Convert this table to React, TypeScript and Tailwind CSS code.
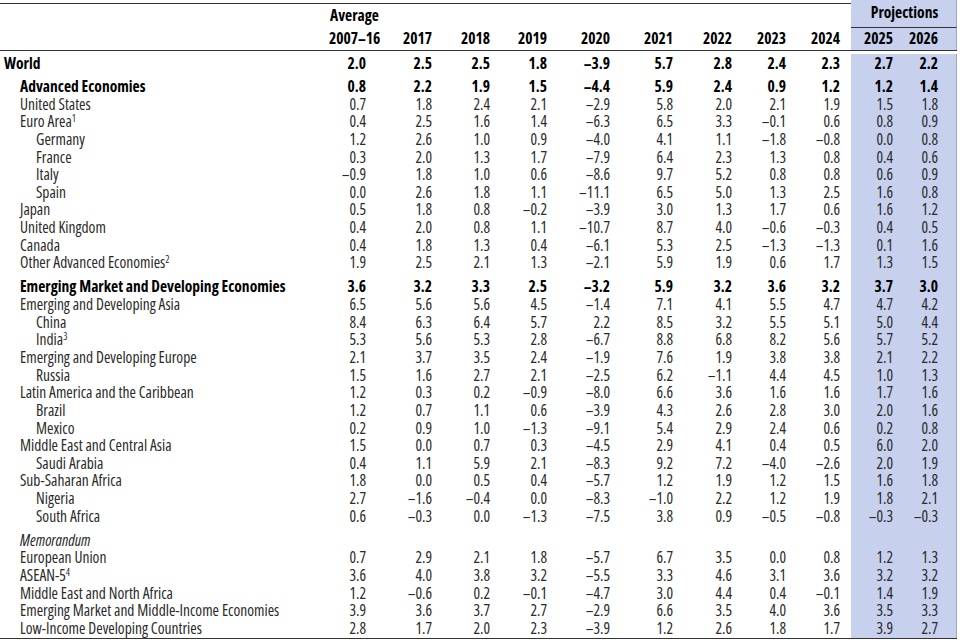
import React from 'react';

type Row = {
  label: string;
  sup?: string;
  level: 0 | 1 | 2;
  bold?: boolean;
  italic?: boolean;
  values?: string[];
  gapBefore?: boolean;
  tall?: boolean;
};

// widths of the historical columns after the average
const yearCols = [
  { y: '2017', w: 'w-[52px]' },
  { y: '2018', w: 'w-[58px]' },
  { y: '2019', w: 'w-[57px]' },
  { y: '2020', w: 'w-[63px]' },
  { y: '2021', w: 'w-[63px]' },
  { y: '2022', w: 'w-[59px]' },
  { y: '2023', w: 'w-[54px]' },
  { y: '2024', w: 'w-[54px]' },
];

const v = (s: string) => s.split(' ').map((x) => x.replace('-', '–'));

const rows: Row[] = [
  { label: 'World', level: 0, bold: true, tall: true, values: v('2.0 2.5 2.5 1.8 -3.9 5.7 2.8 2.4 2.3 2.7 2.2') },
  { label: 'Advanced Economies', level: 1, bold: true, values: v('0.8 2.2 1.9 1.5 -4.4 5.9 2.4 0.9 1.2 1.2 1.4') },
  { label: 'United States', level: 1, values: v('0.7 1.8 2.4 2.1 -2.9 5.8 2.0 2.1 1.9 1.5 1.8') },
  { label: 'Euro Area', sup: '1', level: 1, values: v('0.4 2.5 1.6 1.4 -6.3 6.5 3.3 -0.1 0.6 0.8 0.9') },
  { label: 'Germany', level: 2, values: v('1.2 2.6 1.0 0.9 -4.0 4.1 1.1 -1.8 -0.8 0.0 0.8') },
  { label: 'France', level: 2, values: v('0.3 2.0 1.3 1.7 -7.9 6.4 2.3 1.3 0.8 0.4 0.6') },
  { label: 'Italy', level: 2, values: v('-0.9 1.8 1.0 0.6 -8.6 9.7 5.2 0.8 0.8 0.6 0.9') },
  { label: 'Spain', level: 2, values: v('0.0 2.6 1.8 1.1 -11.1 6.5 5.0 1.3 2.5 1.6 0.8') },
  { label: 'Japan', level: 1, values: v('0.5 1.8 0.8 -0.2 -3.9 3.0 1.3 1.7 0.6 1.6 1.2') },
  { label: 'United Kingdom', level: 1, values: v('0.4 2.0 0.8 1.1 -10.7 8.7 4.0 -0.6 -0.3 0.4 0.5') },
  { label: 'Canada', level: 1, values: v('0.4 1.8 1.3 0.4 -6.1 5.3 2.5 -1.3 -1.3 0.1 1.6') },
  { label: 'Other Advanced Economies', sup: '2', level: 1, values: v('1.9 2.5 2.1 1.3 -2.1 5.9 1.9 0.6 1.7 1.3 1.5') },
  { label: 'Emerging Market and Developing Economies', level: 1, bold: true, gapBefore: true, values: v('3.6 3.2 3.3 2.5 -3.2 5.9 3.2 3.6 3.2 3.7 3.0') },
  { label: 'Emerging and Developing Asia', level: 1, values: v('6.5 5.6 5.6 4.5 -1.4 7.1 4.1 5.5 4.7 4.7 4.2') },
  { label: 'China', level: 2, values: v('8.4 6.3 6.4 5.7 2.2 8.5 3.2 5.5 5.1 5.0 4.4') },
  { label: 'India', sup: '3', level: 2, values: v('5.3 5.6 5.3 2.8 -6.7 8.8 6.8 8.2 5.6 5.7 5.2') },
  { label: 'Emerging and Developing Europe', level: 1, values: v('2.1 3.7 3.5 2.4 -1.9 7.6 1.9 3.8 3.8 2.1 2.2') },
  { label: 'Russia', level: 2, values: v('1.5 1.6 2.7 2.1 -2.5 6.2 -1.1 4.4 4.5 1.0 1.3') },
  { label: 'Latin America and the Caribbean', level: 1, values: v('1.2 0.3 0.2 -0.9 -8.0 6.6 3.6 1.6 1.6 1.7 1.6') },
  { label: 'Brazil', level: 2, values: v('1.2 0.7 1.1 0.6 -3.9 4.3 2.6 2.8 3.0 2.0 1.6') },
  { label: 'Mexico', level: 2, values: v('0.2 0.9 1.0 -1.3 -9.1 5.4 2.9 2.4 0.6 0.2 0.8') },
  { label: 'Middle East and Central Asia', level: 1, values: v('1.5 0.0 0.7 0.3 -4.5 2.9 4.1 0.4 0.5 6.0 2.0') },
  { label: 'Saudi Arabia', level: 2, values: v('0.4 1.1 5.9 2.1 -8.3 9.2 7.2 -4.0 -2.6 2.0 1.9') },
  { label: 'Sub-Saharan Africa', level: 1, values: v('1.8 0.0 0.5 0.4 -5.7 1.2 1.9 1.2 1.5 1.6 1.8') },
  { label: 'Nigeria', level: 2, values: v('2.7 -1.6 -0.4 0.0 -8.3 -1.0 2.2 1.2 1.9 1.8 2.1') },
  { label: 'South Africa', level: 2, values: v('0.6 -0.3 0.0 -1.3 -7.5 3.8 0.9 -0.5 -0.8 -0.3 -0.3') },
  { label: 'Memorandum', level: 1, italic: true, gapBefore: true },
  { label: 'European Union', level: 1, values: v('0.7 2.9 2.1 1.8 -5.7 6.7 3.5 0.0 0.8 1.2 1.3') },
  { label: 'ASEAN-5', sup: '4', level: 1, values: v('3.6 4.0 3.8 3.2 -5.5 3.3 4.6 3.1 3.6 3.2 3.2') },
  { label: 'Middle East and North Africa', level: 1, values: v('1.2 -0.6 0.2 -0.1 -4.7 3.0 4.4 0.4 -0.1 1.4 1.9') },
  { label: 'Emerging Market and Middle-Income Economies', level: 1, values: v('3.9 3.6 3.7 2.7 -2.9 6.6 3.5 4.0 3.6 3.5 3.3') },
  { label: 'Low-Income Developing Countries', level: 1, values: v('2.8 1.7 2.0 2.3 -3.9 1.2 2.6 1.8 1.7 3.9 2.7') },
];

const indent = ['pl-[4px]', 'pl-[20px]', 'pl-[36px]'];

function Spacer() {
  return (
    <div className="flex h-[6.35px]">
      <div className="w-[851px]" />
      <div className="w-[106px] bg-[#c7d0ec] border-r border-[#9ea6c4]" />
    </div>
  );
}

function DataRow({ row }: { row: Row }) {
  const vals = row.values ?? [];
  return (
    <div className={`flex ${row.tall ? 'h-[26px] pt-[3px]' : 'h-[17.65px]'} ${row.bold ? 'font-bold text-black' : 'text-[#2a2a2a]'}`}>
      <div className="flex w-[851px] leading-[18px] whitespace-nowrap">
        <div className={`w-[329px] ${indent[row.level]} ${row.italic ? 'italic' : ''}`}>
          {row.label}
          {row.sup && <sup className="text-[10px] font-normal">{row.sup}</sup>}
        </div>
        <div className="w-[51px] pr-[14px] text-right">{vals[0]}</div>
        {yearCols.map((c, i) => (
          <div key={c.y} className={`${c.w} text-right`}>{vals[i + 1]}</div>
        ))}
      </div>
      <div className="flex w-[106px] leading-[18px] bg-[#c7d0ec] border-r border-[#9ea6c4]">
        <div className="w-[42px] text-right">{vals[9]}</div>
        <div className="w-[45px] text-right">{vals[10]}</div>
      </div>
    </div>
  );
}

export default function App() {
  return (
    <div
      className="w-[960px] h-[644px] bg-white overflow-hidden text-[15.5px] text-[#2a2a2a] font-stretch-condensed"
      style={{ fontFamily: '"Open Sans", "DejaVu Sans Condensed", sans-serif' }}
    >
      <div className="w-[957px]">
        {/* header line 1 */}
        <div className="flex font-bold text-black whitespace-nowrap">
          <div className="w-[851px] pt-[3px]">
            <div className="flex h-[25px] items-center border-t border-[#333]">
              <div className="w-[329px]" />
              <div className="w-[51px] text-center">Average</div>
            </div>
          </div>
          <div className="flex w-[106px] h-[28px] items-center justify-center pl-[2px] pb-[1px] bg-[#c7d0ec] border-b border-r border-b-[#333] border-r-[#9ea6c4]">
            Projections
          </div>
        </div>
        {/* header line 2 */}
        <div className="flex h-[23px] font-bold text-black border-b border-[#333] whitespace-nowrap">
          <div className="flex w-[851px] items-center">
            <div className="w-[329px]" />
            <div className="w-[51px] text-center">2007–16</div>
            {yearCols.map((c) => (
              <div key={c.y} className={`${c.w} text-right`}>{c.y}</div>
            ))}
          </div>
          <div className="flex w-[106px] items-center bg-[#c7d0ec] border-r border-[#9ea6c4]">
            <div className="w-[42px] text-right">2025</div>
            <div className="w-[45px] text-right">2026</div>
          </div>
        </div>
        {rows.map((r) => (
          <React.Fragment key={r.label}>
            {r.gapBefore && <Spacer />}
            <DataRow row={r} />
          </React.Fragment>
        ))}
        <div className="flex h-[2px] border-b border-[#333]">
          <div className="w-[851px]" />
          <div className="w-[106px] bg-[#c7d0ec] border-r border-[#9ea6c4]" />
        </div>
      </div>
    </div>
  );
}
